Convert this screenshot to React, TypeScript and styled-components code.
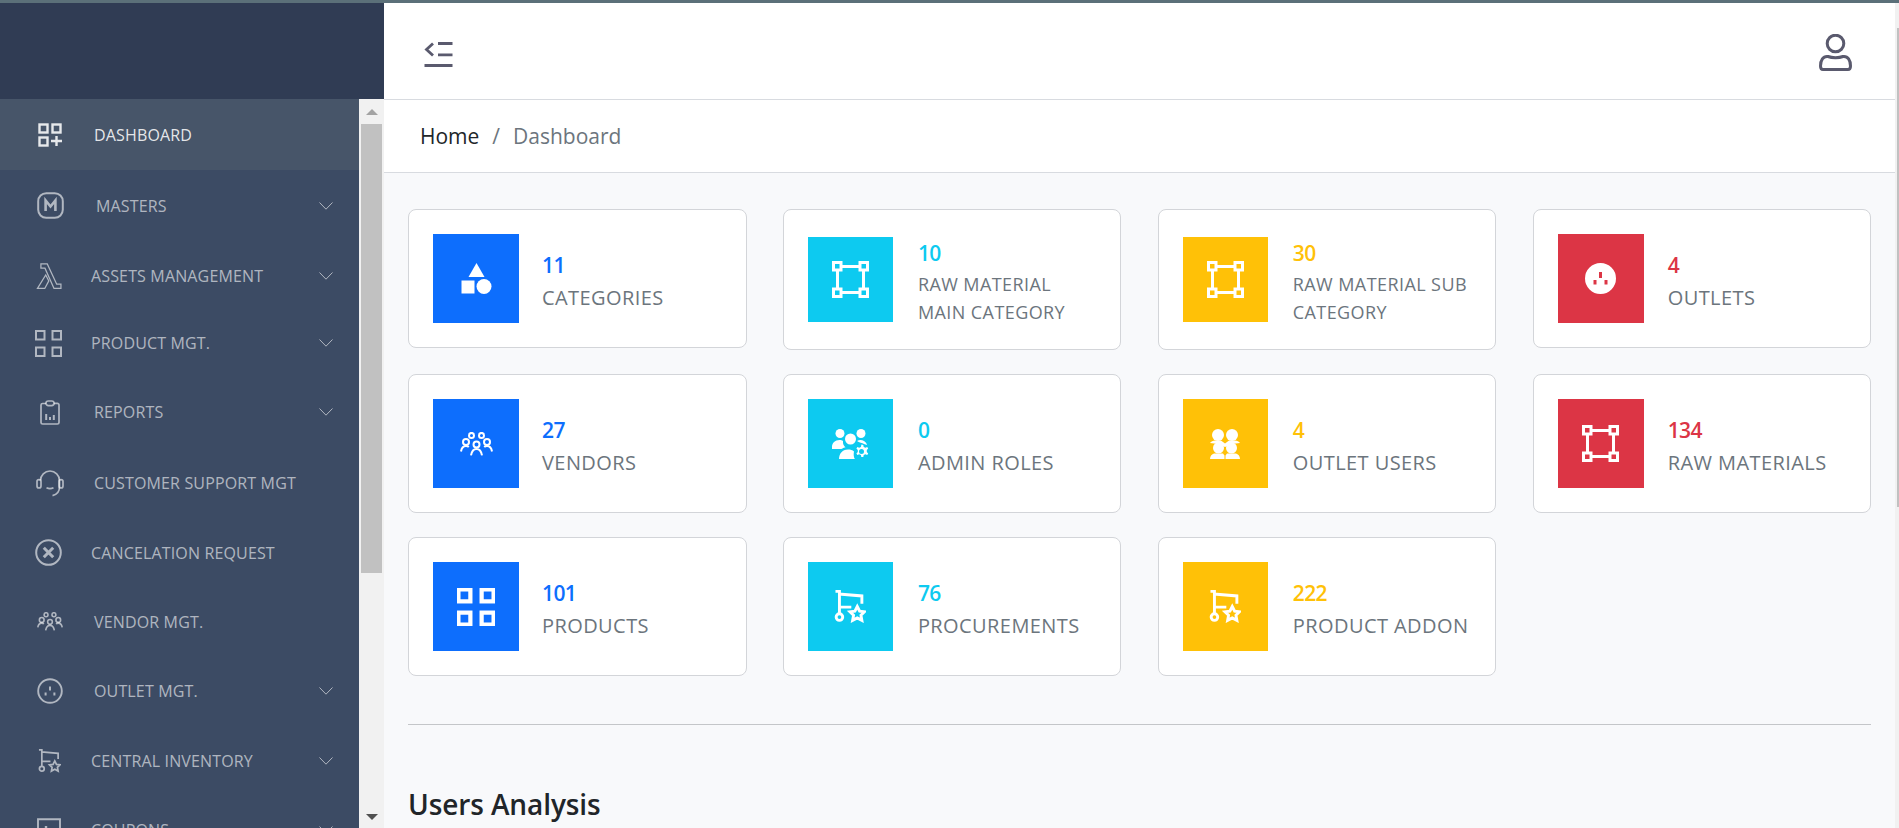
import React from "react";
import styled, { createGlobalStyle } from "styled-components";

const Global = createGlobalStyle`
  html, body { margin: 0; padding: 0; height: 100%; overflow: hidden; background: #f8f9fb; }
  body { font-family: "Open Sans", "Noto Sans", "Liberation Sans", sans-serif; }
  * { box-sizing: border-box; }
`;

const Shell = styled.div`
  height: 828px;
  display: flex;
  flex-direction: column;
  overflow: hidden;
`;
const TopStrip = styled.div`
  height: 3px;
  flex: none;
  background: #5b7079;
`;
const Body = styled.div`
  flex: 1;
  display: flex;
  min-height: 0;
`;
const Sidebar = styled.aside`
  width: 384px;
  flex: none;
  display: flex;
  flex-direction: column;
  min-height: 0;
`;
const Brand = styled.div`
  height: 96px;
  flex: none;
  background: #303c54;
`;
const SideBody = styled.div`
  flex: 1;
  display: flex;
  min-height: 0;
`;
const NavList = styled.nav`
  flex: 1;
  background: #3c4b64;
  overflow: hidden;
`;
const NavRow = styled.div<{ $h: number; $left: number; $text: number; $active?: boolean }>`
  height: ${(p) => p.$h}px;
  padding-left: ${(p) => p.$left}px;
  padding-right: 26px;
  display: grid;
  grid-template-columns: ${(p) => p.$text - p.$left}px 1fr 14px;
  align-items: center;
  background: ${(p) => (p.$active ? "#475569" : "transparent")};
  color: ${(p) => (p.$active ? "rgba(255,255,255,.87)" : "rgba(255,255,255,.6)")};
`;
const NavLabel = styled.span`
  font-size: 16px;
  line-height: 22px;
  letter-spacing: 0.15px;
  white-space: nowrap;
`;
const Glyph = styled.svg`
  display: block;
  fill: none;
  stroke: currentColor;
`;
const ToggleGlyph = styled(Glyph)`
  margin-top: 6px;
`;
const UserGlyph = styled(Glyph)`
  margin-top: 2px;
`;
const SideTrack = styled.div`
  width: 25px;
  flex: none;
  background: #f1f1f1;
  display: flex;
  flex-direction: column;
  align-items: center;
`;
const ArrowUp = styled.div`
  flex: none;
  margin: 10px 0 9px;
  width: 0;
  height: 0;
  border-left: 6px solid transparent;
  border-right: 6px solid transparent;
  border-bottom: 6px solid #a3a3a3;
`;
const SideThumb = styled.div`
  flex: none;
  width: 21px;
  height: 449px;
  background: #c1c1c1;
`;
const ArrowDown = styled.div`
  flex: none;
  margin-top: auto;
  margin-bottom: 8px;
  width: 0;
  height: 0;
  border-left: 6px solid transparent;
  border-right: 6px solid transparent;
  border-top: 6px solid #505050;
`;
const Main = styled.main`
  flex: 1;
  min-width: 0;
  display: flex;
  flex-direction: column;
  overflow: hidden;
`;
const Header = styled.header`
  height: 97px;
  flex: none;
  background: #fff;
  border-bottom: 1px solid #d8dbe0;
  padding: 0 43px 0 40px;
  display: flex;
  align-items: center;
  justify-content: space-between;
  color: #5a5a6e;
`;
const Crumbs = styled.div`
  height: 73px;
  flex: none;
  background: #fff;
  border-bottom: 1px solid #d8dbe0;
  padding: 0 0 0 36px;
  display: flex;
  align-items: center;
  font-size: 21px;
  color: #212529;
`;
const CrumbSep = styled.span`
  color: #6c757d;
  margin: 0 13px;
`;
const CrumbCurrent = styled.span`
  color: #6c757d;
`;
const Content = styled.div`
  flex: 1;
  background: #f8f9fb;
  padding: 36px 24px 0;
`;
const CardGrid = styled.div`
  display: grid;
  grid-template-columns: repeat(4, 338.5px);
  column-gap: 36.4px;
  row-gap: 24px;
  align-items: start;
`;
const Card = styled.div`
  display: flex;
  align-items: center;
  gap: 24px;
  padding: 24px;
  background: #fff;
  border: 1px solid #d3d5d9;
  border-radius: 8px;
`;
const Tile = styled.div<{ $bg: string; $wrapped?: boolean; $narrow?: boolean }>`
  width: ${(p) => (p.$narrow ? 85 : 86)}px;
  height: ${(p) => (p.$wrapped ? 85 : 89)}px;
  flex: none;
  background: ${(p) => p.$bg};
  color: #fff;
  display: flex;
  align-items: center;
  justify-content: center;
`;
const CardText = styled.div<{ $wrapped?: boolean; $shift: number }>`
  align-self: flex-start;
  padding-top: ${(p) => (p.$wrapped ? 4 : 16)}px;
  margin-bottom: ${(p) => (p.$wrapped ? -1 : 0)}px;
  margin-left: ${(p) => p.$shift}px;
  min-width: 0;
`;
const Count = styled.div<{ $color: string }>`
  font-size: 21px;
  line-height: 30px;
  font-weight: 600;
  letter-spacing: -0.6px;
  color: ${(p) => p.$color};
`;
const Label = styled.div<{ $wrapped?: boolean }>`
  margin-top: ${(p) => (p.$wrapped ? 2 : 3)}px;
  font-size: ${(p) => (p.$wrapped ? 18 : 20)}px;
  line-height: ${(p) => (p.$wrapped ? 28 : 30)}px;
  font-weight: 500;
  letter-spacing: 0.42px;
  color: #6c757d;
  white-space: nowrap;
`;
const Divider = styled.hr`
  margin: 48px 0 0;
  border: 0;
  border-top: 1px solid #c4c6c9;
`;
const Title = styled.h2`
  margin: 61px 0 0;
  font-size: 28px;
  line-height: 36px;
  font-weight: 600;
  letter-spacing: -0.1px;
  color: #212529;
`;
const PageTrack = styled.div`
  width: 4px;
  flex: none;
  background: #f1f1f1;
  padding: 25px 0 0 2px;
`;
const PageThumb = styled.div`
  height: 479px;
  background: #c1c1c1;
`;

type IconProps = { w: number; h?: number; sw?: number };

const IApps = ({ w }: IconProps) => (
  <Glyph width={w} height={w} viewBox="0 0 24 24" strokeWidth="2.4">
    <rect x="1.5" y="1.5" width="8" height="8" />
    <rect x="14.5" y="1.5" width="8" height="8" />
    <rect x="1.5" y="14.5" width="8" height="8" />
    <path d="M18.5 13v10M13 18h11" />
  </Glyph>
);
const IMaster = ({ w }: IconProps) => (
  <Glyph width={w} height={w} viewBox="0 0 27 27" strokeWidth="2">
    <rect x="1.2" y="1.2" width="24.6" height="24.6" rx="8" />
    <path d="M8.6 19V8.500l4.900 6 4.900-6V19" strokeWidth="2.600" />
  </Glyph>
);
const ILambda = ({ w }: IconProps) => (
  <Glyph width={w} height={w} viewBox="0 0 26 27" strokeWidth="1.3">
    <path d="M4.6 1h6.6L21 22h4.4v4.4h-7.2L8.8 5.4H4.6zM9.6 12.4l3.2 6.2-4.2 7.8H1z" />
  </Glyph>
);
const IGrid = ({ w, sw = 2 }: IconProps) => (
  <Glyph width={w} height={w} viewBox="0 0 27 27" strokeWidth={sw}>
    <rect x="1" y="1" width="8.500" height="8.500" />
    <rect x="17.500" y="1" width="8.500" height="8.500" />
    <rect x="1" y="17.500" width="8.500" height="8.500" />
    <rect x="17.500" y="17.500" width="8.500" height="8.500" />
  </Glyph>
);
const IClipboard = ({ w, h }: IconProps) => (
  <Glyph width={w} height={h} viewBox="0 0 20 25" strokeWidth="1.7">
    <path d="M6 3.5H2.6A1.6 1.6 0 0 0 1 5v17.4A1.6 1.6 0 0 0 2.6 24h14.8a1.6 1.6 0 0 0 1.6-1.6V5a1.6 1.6 0 0 0-1.6-1.6H14" />
    <rect x="6" y="1" width="8" height="4.6" rx="2.3" />
    <path d="M6.2 20v-6M10 20v-3M13.8 20v-5" strokeWidth="2" />
  </Glyph>
);
const IHeadset = ({ w }: IconProps) => (
  <Glyph width={w} height={w} viewBox="0 0 28 28" strokeWidth="1.7">
    <path d="M4.5 11.5a9.5 9.5 0 0 1 19 0V18c0 4.5-3 7.6-7 8.6" />
    <rect x="1" y="10.6" width="4" height="8.4" rx="2" />
    <rect x="23" y="10.6" width="4" height="8.4" rx="2" />
    <path d="M10.5 18.8c2 1 5 1 7 0" />
  </Glyph>
);
const ICancel = ({ w }: IconProps) => (
  <Glyph width={w} height={w} viewBox="0 0 27 27" strokeWidth="2">
    <circle cx="13.5" cy="13.5" r="12.3" />
    <path d="M8.8 8.8l9.4 9.4M18.2 8.8l-9.4 9.4" strokeWidth="3" />
  </Glyph>
);
const IGroup = ({ w, h }: IconProps) => (
  <Glyph width={w} height={h} viewBox="0 0 33 24" strokeWidth="2">
    <circle cx="11.5" cy="3.4" r="2.5" />
    <circle cx="21.5" cy="3.4" r="2.5" />
    <circle cx="6" cy="10" r="3" />
    <circle cx="16.5" cy="12.4" r="3" />
    <circle cx="27" cy="10" r="3" />
    <path d="M1 19.5c.6-3.5 2.2-5.4 5-5.4 1 0 2 .3 2.8 1M32 19.5c-.6-3.5-2.2-5.4-5-5.4-1 0-2 .3-2.8 1M11 23.4c.6-3.700 2.400-6.500 5.500-6.500s4.900 2.800 5.500 6.500" />
  </Glyph>
);
const IOutletRing = ({ w }: IconProps) => (
  <Glyph width={w} height={w} viewBox="0 0 26 26" strokeWidth="1.9">
    <circle cx="13" cy="13" r="11.8" />
    <path d="M13 8.4v4M8.6 14.4v3M17.4 14.4v3" strokeWidth="2" />
  </Glyph>
);
const IOutletSolid = ({ w }: IconProps) => (
  <svg width={w} height={w} viewBox="0 0 31 31" fill="currentColor" fillRule="evenodd">
    <path d="M15.5 0a15.5 15.5 0 1 1 0 31a15.5 15.5 0 1 1 0-31zM14 9v6h3V9zM8.5 17v4.500h3V17zM19.500 17v4.500h3V17z" />
  </svg>
);
const ICart = ({ w, h, sw = 1.8 }: IconProps) => (
  <Glyph width={w} height={h} viewBox="0 0 24 25" strokeWidth={sw}>
    <path d="M1 1h3v16.500M3.500 3l17.500 1.500v6M4 13h9" />
    <circle cx="4" cy="20.500" r="2.500" />
    <path d="M17.500 12.500l1.800 3.500 3.700.5-2.700 2.600.7 3.900-3.500-1.900-3.500 1.900.7-3.900-2.700-2.600 3.700-.5z" />
  </Glyph>
);
const ICoupon = ({ w }: IconProps) => (
  <Glyph width={w} height={w} viewBox="0 0 24 24" strokeWidth="1.9">
    <path d="M1 1.200h22v21.600H1z" />
    <path d="M9 8v2M9 13v2" strokeWidth="2.4" />
  </Glyph>
);
const IChevron = () => (
  <Glyph width={14} height={8} viewBox="0 0 14 8" strokeWidth="1">
    <path d="M.5.5L7 7.200 13.500.5" />
  </Glyph>
);
const IShapes = ({ w }: IconProps) => (
  <svg width={w} height={w} viewBox="0 0 30 31" fill="currentColor">
    <path d="M15 0l8 14H7z" />
    <rect x="0" y="17.500" width="13" height="13" />
    <ellipse cx="22.500" cy="23.500" rx="7.500" ry="7.500" />
  </svg>
);
const IVector = ({ w, h }: IconProps) => (
  <Glyph width={w} height={h} viewBox="0 0 37 37" strokeWidth="3">
    <rect x="1.500" y="1.500" width="7.500" height="7.500" />
    <rect x="28" y="1.500" width="7.500" height="7.500" />
    <rect x="1.500" y="28" width="7.500" height="7.500" />
    <rect x="28" y="28" width="7.500" height="7.500" />
    <path d="M9 5.500h19M9 31.500h19M5.500 9v19M31.500 9v19" />
  </Glyph>
);
const IPeopleGear = ({ w, h }: IconProps) => (
  <svg width={w} height={h} viewBox="0 0 37 30" fill="currentColor" fillRule="evenodd">
    <circle cx="8" cy="4.500" r="4.500" />
    <circle cx="29" cy="4.500" r="4.500" />
    <circle cx="18.500" cy="10" r="5.500" />
    <path d="M0 18c0-4 3-7 7.500-7 1.500 0 2.500.3 3.500 1-.5 3 1 5 2.500 6.200C11 19 9.500 20 8.500 20H0zM7 30c0-5 3-9.500 9-9.500 2.500 0 4.500.5 6 2-.5 2.500-.5 5 .8 7.500zM25 12c2-1.500 5-1.500 7 0 2.500 1.500 3 3.500 3 4l-3-1c-1.500-1-5-1.500-7-3z" />
    <path d="M29.500 15.500l1.800.4.400 2 1.700.9 1.800-.8 1 1.600-1.400 1.400v2l1.400 1.400-1 1.600-1.800-.8-1.700.9-.4 2h-2l-.4-2-1.700-.9-1.800.8-1-1.600 1.400-1.400v-2l-1.400-1.400 1-1.600 1.800.8 1.700-.9.400-2zM29.500 20a2.500 2.500 0 1 0 0 5a2.500 2.500 0 1 0 0-5z" />
  </svg>
);
const ICouple = ({ w, h }: IconProps) => (
  <svg width={w} height={h} viewBox="0 0 30 30" fill="currentColor">
    <ellipse cx="8" cy="6" rx="6" ry="6" />
    <ellipse cx="22" cy="6" rx="6" ry="6" />
    <path d="M0 14c1-1.500 3-2.500 5-2.500h6l4 3 4-3h6c2 0 4 1 5 2.500l-8 1-7 3-7-3z" />
    <ellipse cx="8.500" cy="19" rx="5.500" ry="5.500" />
    <ellipse cx="21.500" cy="19" rx="5.500" ry="5.500" />
    <path d="M0 30c0-3 2-5 4-5.500h9l1.500 2V30zM30 30c0-3-2-5-4-5.500h-9l-1.500 2V30z" />
  </svg>
);

const TOGGLE = (
  <ToggleGlyph width={29} height={25} viewBox="0 0 29 25" strokeWidth="2.800">
    <path d="M9 1.500L2.500 7.500 9 13.500" />
    <path d="M14 1.500h14.500M14 12.800h14.500M.500 23.500h28" />
  </ToggleGlyph>
);
const USER = (
  <UserGlyph width={33} height={37} viewBox="0 0 33 37" strokeWidth="3">
    <circle cx="16.500" cy="9.500" r="8.300" />
    <path d="M9 22.500c4 1.700 11 1.700 15 0 5-.7 7.500 4 7.500 9.500 0 2.500-1 3.500-2.500 3.500H4c-1.500 0-2.500-1-2.500-3.500 0-5.500 2.500-10.200 7.500-9.500z" />
  </UserGlyph>
);

const navItems: {
  label: string;
  h: number;
  left: number;
  text: number;
  icon: React.ReactNode;
  chevron?: boolean;
  active?: boolean;
}[] = [
  { label: "DASHBOARD", h: 71, left: 38, text: 94, icon: <IApps w={24} />, active: true },
  { label: "MASTERS", h: 71, left: 37, text: 96, icon: <IMaster w={27} />, chevron: true },
  { label: "ASSETS MANAGEMENT", h: 69, left: 36, text: 91, icon: <ILambda w={26} />, chevron: true },
  { label: "PRODUCT MGT.", h: 66, left: 35, text: 91, icon: <IGrid w={27} />, chevron: true },
  { label: "REPORTS", h: 72, left: 40, text: 94, icon: <IClipboard w={20} h={25} />, chevron: true },
  { label: "CUSTOMER SUPPORT MGT", h: 70, left: 36, text: 94, icon: <IHeadset w={28} /> },
  { label: "CANCELATION REQUEST", h: 69, left: 35, text: 91, icon: <ICancel w={27} /> },
  { label: "VENDOR MGT.", h: 69, left: 37, text: 94, icon: <IGroup w={26} h={19} /> },
  { label: "OUTLET MGT.", h: 70, left: 37, text: 94, icon: <IOutletRing w={26} />, chevron: true },
  { label: "CENTRAL INVENTORY", h: 69, left: 38, text: 91, icon: <ICart w={23} h={24} />, chevron: true },
  { label: "COUPONS", h: 69, left: 37, text: 91, icon: <ICoupon w={24} />, chevron: true },
];

const BLUE = "#0d6efd";
const CYAN = "#0dcaf0";
const YELLOW = "#ffc107";
const RED = "#dc3545";

const cards: { n: string; lines: string[]; color: string; icon: React.ReactNode }[] = [
  { n: "11", lines: ["CATEGORIES"], color: BLUE, icon: <IShapes w={31} /> },
  { n: "10", lines: ["RAW MATERIAL", "MAIN CATEGORY"], color: CYAN, icon: <IVector w={37} h={37} /> },
  { n: "30", lines: ["RAW MATERIAL SUB", "CATEGORY"], color: YELLOW, icon: <IVector w={37} h={37} /> },
  { n: "4", lines: ["OUTLETS"], color: RED, icon: <IOutletSolid w={31} /> },
  { n: "27", lines: ["VENDORS"], color: BLUE, icon: <IGroup w={33} h={24} /> },
  { n: "0", lines: ["ADMIN ROLES"], color: CYAN, icon: <IPeopleGear w={37} h={30} /> },
  { n: "4", lines: ["OUTLET USERS"], color: YELLOW, icon: <ICouple w={30} h={30} /> },
  { n: "134", lines: ["RAW MATERIALS"], color: RED, icon: <IVector w={37} h={37} /> },
  { n: "101", lines: ["PRODUCTS"], color: BLUE, icon: <IGrid w={38} sw={3} /> },
  { n: "76", lines: ["PROCUREMENTS"], color: CYAN, icon: <ICart w={32} h={33} sw={2.2} /> },
  { n: "222", lines: ["PRODUCT ADDON"], color: YELLOW, icon: <ICart w={32} h={33} sw={2.2} /> },
];

const textShift = [-1, 1, 1, 0];

export default function App() {
  return (
    <Shell>
      <Global />
      <TopStrip />
      <Body>
        <Sidebar>
          <Brand />
          <SideBody>
            <NavList>
              {navItems.map((item) => (
                <NavRow key={item.label} $h={item.h} $left={item.left} $text={item.text} $active={item.active}>
                  {item.icon}
                  <NavLabel>{item.label}</NavLabel>
                  {item.chevron ? <IChevron /> : <span />}
                </NavRow>
              ))}
            </NavList>
            <SideTrack>
              <ArrowUp />
              <SideThumb />
              <ArrowDown />
            </SideTrack>
          </SideBody>
        </Sidebar>
        <Main>
          <Header>
            {TOGGLE}
            {USER}
          </Header>
          <Crumbs>
            <span>Home</span>
            <CrumbSep>/</CrumbSep>
            <CrumbCurrent>Dashboard</CrumbCurrent>
          </Crumbs>
          <Content>
            <CardGrid>
              {cards.map((c, i) => {
                const wrapped = c.lines.length > 1;
                const col = i % 4;
                return (
                  <Card key={c.lines[0] + c.n}>
                    <Tile $bg={c.color} $wrapped={wrapped} $narrow={col === 1 || col === 2}>
                      {c.icon}
                    </Tile>
                    <CardText $wrapped={wrapped} $shift={textShift[col]}>
                      <Count $color={c.color}>{c.n}</Count>
                      <Label $wrapped={wrapped}>
                        {c.lines.map((line) => (
                          <div key={line}>{line}</div>
                        ))}
                      </Label>
                    </CardText>
                  </Card>
                );
              })}
            </CardGrid>
            <Divider />
            <Title>Users Analysis</Title>
          </Content>
        </Main>
        <PageTrack>
          <PageThumb />
        </PageTrack>
      </Body>
    </Shell>
  );
}
